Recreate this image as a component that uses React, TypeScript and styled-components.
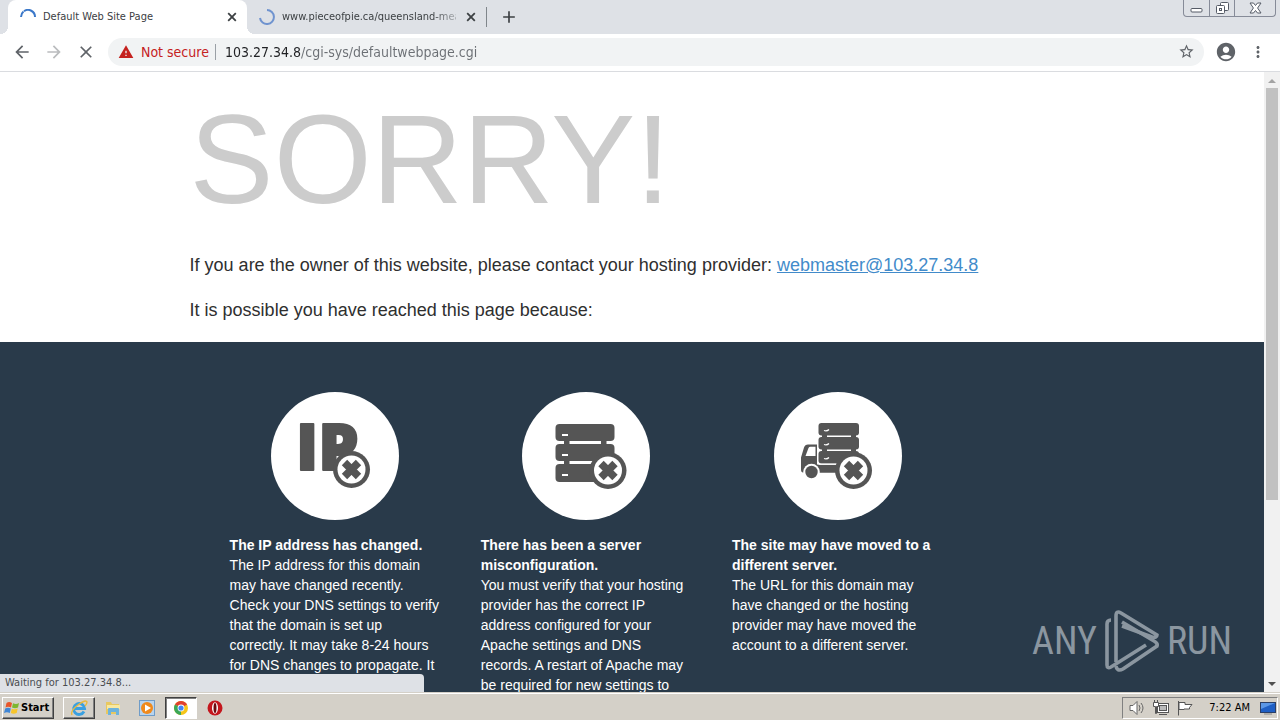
import React from "react";
import styled, { createGlobalStyle, css } from "styled-components";
import {
  MdAccountCircle,
  MdAdd,
  MdArrowBack,
  MdArrowForward,
  MdClose,
  MdMoreVert,
  MdStarBorder,
  MdWarning,
} from "react-icons/md";

const uiFont = '"DejaVu Sans Condensed", "DejaVu Sans", sans-serif';
const pageFont = '"Liberation Sans", Arial, sans-serif';

const GlobalStyle = createGlobalStyle`
  * { box-sizing: border-box; }
  body { margin: 0; background: #fff; }
  button { font: inherit; color: inherit; border: 0; padding: 0; background: none; cursor: pointer; }
  svg { display: block; flex: none; }
`;

const Desktop = styled.div`
  display: flex;
  flex-direction: column;
  height: 100vh;
  overflow: hidden;
  font-family: ${uiFont};
`;

/* Tab strip */

const TabStrip = styled.header`
  display: flex;
  align-items: stretch;
  height: 34px;
  padding: 0 4px 0 8px;
  background: #dee1e6;
`;

const Tab = styled.div<{ $active?: boolean }>`
  position: relative;
  display: flex;
  align-items: center;
  gap: 7px;
  flex: 0 1 239px;
  min-width: 0;
  padding: 0 7px 0 12px;
  color: #3c4043;
  font-size: 11px;
  ${({ $active }) =>
    $active &&
    css`
      background: #fff;
      border-radius: 8px 8px 0 0;
      &::before,
      &::after {
        content: "";
        position: absolute;
        bottom: 0;
        width: 8px;
        height: 8px;
      }
      &::before {
        left: -8px;
        background: radial-gradient(circle at 0 0, #dee1e6 8px, #fff 8px);
      }
      &::after {
        right: -8px;
        background: radial-gradient(circle at 100% 0, #dee1e6 8px, #fff 8px);
      }
    `}
`;

const TabTitle = styled.button<{ $fade?: boolean }>`
  flex: 1;
  min-width: 0;
  overflow: hidden;
  white-space: nowrap;
  text-align: left;
  line-height: 16px;
  ${({ $fade }) => $fade && "mask-image: linear-gradient(to right, #000 150px, transparent 184px);"}
`;

const IconButton = styled.button<{ $size: number; $color?: string }>`
  display: flex;
  align-items: center;
  justify-content: center;
  flex: none;
  width: ${({ $size }) => $size}px;
  height: ${({ $size }) => $size}px;
  color: ${({ $color }) => $color || "#5f6368"};
`;

const TabDivider = styled.span`
  align-self: center;
  width: 1px;
  height: 20px;
  background: #80868b;
`;

const NewTab = styled(IconButton)`
  align-self: center;
  margin-left: 8px;
`;

const WindowControls = styled.div`
  display: flex;
  align-self: flex-start;
  margin-left: auto;
  height: 17px;
  border: 1px solid #868b98;
  border-top: 0;
  border-radius: 0 0 4px 4px;
`;

const WindowButton = styled.button<{ $wide?: boolean }>`
  display: flex;
  align-items: center;
  justify-content: center;
  width: ${({ $wide }) => ($wide ? 41 : 25)}px;
  & + & {
    border-left: 1px solid #868b98;
  }
`;

/* Toolbar */

const Toolbar = styled.nav`
  display: flex;
  align-items: center;
  height: 38px;
  padding: 0 6px 2px;
  background: #fff;
  border-bottom: 1px solid #dadce0;
`;

const Omnibox = styled.div`
  display: flex;
  align-items: center;
  flex: 1;
  min-width: 0;
  height: 28px;
  margin: 0 6px;
  padding: 0 8px 0 10px;
  border-radius: 14px;
  background: #f1f3f4;
`;

const SecurityButton = styled.button`
  display: flex;
  align-items: center;
  gap: 7px;
  color: #c5221f;
  font-size: 14px;
  white-space: nowrap;
`;

const OmniboxDivider = styled.span`
  width: 1px;
  height: 16px;
  margin: 0 9px 0 6px;
  background: #9aa0a6;
`;

const AddressInput = styled.input`
  flex: 1;
  min-width: 0;
  height: 20px;
  padding: 0;
  border: 0;
  outline: 0;
  font-family: ${uiFont};
  font-size: 14px;
  color: #5f6368;
  background: linear-gradient(to right, #202124 76px, #6b6f74 76px);
  background-clip: text;
  -webkit-text-fill-color: transparent;
`;

/* Page */

const Viewport = styled.div`
  position: relative;
  display: flex;
  flex: 1;
  min-height: 0;
`;

const Page = styled.main`
  flex: 1;
  min-width: 0;
  overflow: hidden;
  background: #fff;
  color: #2f2f2f;
  font-family: ${pageFont};
`;

const Container = styled.div`
  width: 70%;
  margin: 0 auto;
`;

const Intro = styled.section`
  padding-bottom: 19px;
`;

const Sorry = styled.h1`
  margin: 0;
  padding: 18px 0 23px;
  color: #ccc;
  font-size: 126px;
  font-weight: 400;
  line-height: 140px;
`;

const Lead = styled.p`
  margin: 0;
  font-size: 18px;
  line-height: 25px;
  & + & {
    margin-top: 20px;
  }
`;

const MailLink = styled.a`
  color: #428bca;
  text-decoration: underline;
`;

const Reasons = styled.section`
  min-height: 100%;
  padding: 50px 0;
  background: #293a4a;
  color: #fff;
`;

const ReasonList = styled.ul`
  display: flex;
  gap: 40px;
  margin: 0;
  padding: 0 0 0 40px;
  list-style: none;
`;

const Reason = styled.li`
  flex: 0 0 25%;
  font-size: 14px;
  line-height: 20px;
`;

const Badge = styled.svg`
  width: 128px;
  height: 128px;
  margin: 0 auto 15px;
`;

const ReasonTitle = styled.h2`
  margin: 0;
  font-size: 14px;
  font-weight: 700;
  line-height: 20px;
`;

const ReasonText = styled.p`
  margin: 0;
`;

const Scrollbar = styled.div`
  display: flex;
  flex-direction: column;
  align-items: center;
  width: 16px;
  background: #f1f1f1;
`;

const ScrollTrack = styled.div`
  flex: 1;
  width: 12px;
`;

const ScrollThumb = styled.div`
  height: 70%;
  background: #c1c1c1;
`;

const StatusBubble = styled.div`
  position: absolute;
  left: 0;
  bottom: 0;
  width: 424px;
  max-width: 50%;
  padding: 0 5px;
  border-top-right-radius: 4px;
  background: #dee1e6;
  color: #4a4d51;
  font-size: 11px;
  line-height: 18px;
`;

const Watermark = styled.div`
  position: absolute;
  right: 48px;
  bottom: 18px;
  display: flex;
  align-items: center;
  gap: 7px;
  color: #8b96a0;
  font-family: "Roboto Condensed", "Liberation Sans Narrow", sans-serif;
  font-size: 38px;
  line-height: 66px;
`;

/* Taskbar */

const Taskbar = styled.footer`
  display: flex;
  align-items: center;
  height: 28px;
  padding: 2px 2px 0;
  border-top: 1px solid #d4d0c8;
  background: #d4d0c8;
  box-shadow: inset 0 1px 0 #fff;
  color: #000;
  font-size: 11px;
`;

const raised = css`
  border: 1px solid;
  border-color: #fff #404040 #404040 #fff;
  box-shadow: inset -1px -1px 0 #808080;
`;

const StartButton = styled.button`
  display: flex;
  align-items: center;
  gap: 1px;
  width: 52px;
  height: 22px;
  margin-right: 9px;
  padding-left: 1px;
  font-weight: 700;
  ${raised}
`;

const TaskButton = styled.button<{ $state?: "raised" | "pressed" }>`
  display: flex;
  align-items: center;
  justify-content: center;
  width: 32px;
  height: 22px;
  margin-right: 2px;
  ${({ $state }) => $state === "raised" && raised}
  ${({ $state }) =>
    $state === "pressed" &&
    css`
      background: #fff;
      border: 1px solid;
      border-color: #404040 #fff #fff #404040;
      box-shadow: inset 1px 1px 0 #808080;
    `}
`;

const Tray = styled.div`
  display: flex;
  align-items: center;
  gap: 8px;
  height: 22px;
  margin-left: auto;
  padding: 0 1px 0 6px;
  border: 1px solid;
  border-color: #808080 #fff #fff #808080;
`;

const Clock = styled.time`
  margin: 0 2px 0 8px;
  white-space: nowrap;
`;

const Spinner = ({ dash, color }: { dash: string; color: string }) => (
  <svg width="16" height="16" viewBox="0 0 16 16" fill="none" aria-hidden="true">
    <path d={dash} stroke={color} strokeWidth="2" />
  </svg>
);

const TabClose = () => (
  <IconButton $size={16} $color="#3c4043" aria-label="Close tab">
    <svg width="10" height="10" viewBox="0 0 10 10" stroke="currentColor" strokeWidth="1.800" aria-hidden="true">
      <path d="M1.200 1.200l7.600 7.600M8.800 1.200l-7.600 7.600" />
    </svg>
  </IconButton>
);

const CrossMark = ({ x, y }: { x: number; y: number }) => (
  <g transform={`translate(${x} ${y})`}>
    <circle r="18.5" fill="#555" />
    <circle r="14" fill="#fff" />
    <path d="M-7-7L7 7M7-7L-7 7" stroke="#555" strokeWidth="7.6" />
  </g>
);

const IpBadge = () => (
  <Badge viewBox="0 0 128 128" aria-hidden="true">
    <circle cx="64" cy="64" r="64" fill="#fff" />
    <text x="25" y="78" fontFamily="'Open Sans', sans-serif" fontWeight="800" fontSize="64" fill="#555" stroke="#555" strokeWidth="2" strokeLinejoin="round">
      IP
    </text>
    <CrossMark x={80.5} y={77.5} />
  </Badge>
);

const ServerBadge = () => (
  <Badge viewBox="0 0 128 128" aria-hidden="true">
    <circle cx="64" cy="64" r="64" fill="#fff" />
    <g fill="#555">
      <rect x="33.500" y="32" width="59" height="17" rx="4" />
      <rect x="33.500" y="52" width="59" height="17" rx="4" />
      <rect x="33.500" y="72" width="59" height="18" rx="4" />
      <path d="M42 48h5.500v6H42zM79 48h5.500v6H79zM42 68h5.500v6H42zM79 68h5.500v6H79z" />
    </g>
    <path d="M40 43h6M40 63h6M40 83h6" stroke="#fff" strokeWidth="2" />
    <CrossMark x={86} y={78.5} />
  </Badge>
);

const TruckBadge = () => (
  <Badge viewBox="0 0 128 128" aria-hidden="true">
    <circle cx="64" cy="64" r="64" fill="#fff" />
    <g fill="#555">
      <rect x="44.500" y="31" width="40.500" height="12.500" rx="3" />
      <rect x="44.500" y="45" width="40.500" height="12.500" rx="3" />
      <rect x="44.500" y="59" width="40.500" height="12.500" rx="3" />
      <path d="M48 43h5v3h-5zM77 43h5v3h-5zM48 57h5v3h-5zM77 57h5v3h-5z" />
      <path d="M43 52.500H34q-3 0-4 3l-3 10v12q0 3 2 3h34v-8H43z" />
      <path d="M43 73h23v7.500H43z" />
    </g>
    <path d="M31.500 64l3-8q.5-1.300 2-1.300H41.500V64z" fill="#fff" />
    <path d="M44.500 72.300H66" stroke="#fff" strokeWidth="1.200" />
    <circle cx="37.500" cy="80" r="8.300" fill="#fff" />
    <circle cx="37.500" cy="80" r="6.200" fill="#555" />
    <path d="M50 38.500q3 1 5-1M50 52.500q3 1 5-1M50 66.500q3 1 5-1" stroke="#fff" strokeWidth="1.200" fill="none" />
    <CrossMark x={79.5} y={78.5} />
  </Badge>
);

const PlayLogo = () => (
  <svg width="56" height="66" viewBox="0 0 56 66" fill="none" stroke="currentColor" strokeWidth="3.600" aria-hidden="true">
    <path d="M7 12Q3 12 3 16V57Q3 61 7 59L42 37" />
    <path d="M12 54V8Q12 2 17 5L53 27Q53 30 48 29L18 18" />
    <path d="M12 58Q13 64 19 61L53 38Q54 35 50 33L18 14" />
  </svg>
);

const reasons = [
  {
    Icon: IpBadge,
    title: "The IP address has changed.",
    text: "The IP address for this domain may have changed recently. Check your DNS settings to verify that the domain is set up correctly. It may take 8-24 hours for DNS changes to propagate. It may be possible to restore access to this site by following these instructions for clearing your dns cache.",
  },
  {
    Icon: ServerBadge,
    title: "There has been a server misconfiguration.",
    text: "You must verify that your hosting provider has the correct IP address configured for your Apache settings and DNS records. A restart of Apache may be required for new settings to take affect.",
  },
  {
    Icon: TruckBadge,
    title: "The site may have moved to a different server.",
    text: "The URL for this domain may have changed or the hosting provider may have moved the account to a different server.",
  },
];

export default function App() {
  return (
    <Desktop>
      <GlobalStyle />
      <TabStrip>
        <Tab $active>
          <Spinner color="#3b78c9" dash="M1 8A7 7 0 0 1 3.500 2.600M4 2.200A7 7 0 0 1 15 8" />
          <TabTitle>Default Web Site Page</TabTitle>
          <TabClose />
        </Tab>
        <Tab>
          <Spinner color="#6f93cf" dash="M8 1A7 7 0 1 1 1 9" />
          <TabTitle $fade>www.pieceofpie.ca/queensland-mea</TabTitle>
          <TabClose />
        </Tab>
        <TabDivider />
        <NewTab $size={28} $color="#3c4043" aria-label="New tab">
          <MdAdd size={20} />
        </NewTab>
        <WindowControls>
          <WindowButton aria-label="Minimize">
            <svg width="13" height="14" viewBox="0 0 13 14" fill="#fff" stroke="#555b66">
              <rect x="1" y="7.500" width="11" height="3.500" rx="1" />
            </svg>
          </WindowButton>
          <WindowButton aria-label="Restore">
            <svg width="13" height="14" viewBox="0 0 13 14" fill="#fff" stroke="#555b66">
              <rect x="4.500" y="1.500" width="8" height="8" rx="1" />
              <rect x="0.500" y="4.500" width="8" height="8" rx="1" />
              <rect x="3.500" y="7.500" width="2" height="2" />
            </svg>
          </WindowButton>
          <WindowButton $wide aria-label="Close">
            <svg width="13" height="12" viewBox="0 0 13 12" fill="#fff" stroke="#555b66">
              <path d="M1 1h3.500l2 2.500L8.500 1H12L8.600 6 12 11H8.500l-2-2.500-2 2.500H1l3.400-5z" />
            </svg>
          </WindowButton>
        </WindowControls>
      </TabStrip>

      <Toolbar>
        <IconButton $size={32} aria-label="Back"><MdArrowBack size={20} /></IconButton>
        <IconButton $size={32} $color="#babcbe" aria-label="Forward"><MdArrowForward size={20} /></IconButton>
        <IconButton $size={32} aria-label="Stop loading"><MdClose size={20} /></IconButton>
        <Omnibox>
          <SecurityButton>
            <MdWarning size={16} />
            Not secure
          </SecurityButton>
          <OmniboxDivider />
          <AddressInput aria-label="Address" defaultValue="103.27.34.8/cgi-sys/defaultwebpage.cgi" />
          <IconButton $size={20} aria-label="Bookmark"><MdStarBorder size={17} /></IconButton>
        </Omnibox>
        <IconButton $size={32} aria-label="Profile"><MdAccountCircle size={22} /></IconButton>
        <IconButton $size={32} aria-label="Menu"><MdMoreVert size={18} /></IconButton>
      </Toolbar>

      <Viewport>
        <Page>
          <Intro>
            <Container>
              <Sorry>SORRY!</Sorry>
              <Lead>
                If you are the owner of this website, please contact your hosting provider:{" "}
                <MailLink href="mailto:webmaster@103.27.34.8">webmaster@103.27.34.8</MailLink>
              </Lead>
              <Lead>It is possible you have reached this page because:</Lead>
            </Container>
          </Intro>
          <Reasons>
            <Container>
              <ReasonList>
                {reasons.map(({ Icon, title, text }) => (
                  <Reason key={title}>
                    <Icon />
                    <ReasonTitle>{title}</ReasonTitle>
                    <ReasonText>{text}</ReasonText>
                  </Reason>
                ))}
              </ReasonList>
            </Container>
          </Reasons>
        </Page>
        <Scrollbar>
          <svg width="16" height="16" viewBox="0 0 16 16"><path d="M4 11l4-4 4 4z" fill="#a3a3a3" /></svg>
          <ScrollTrack><ScrollThumb /></ScrollTrack>
          <svg width="16" height="16" viewBox="0 0 16 16"><path d="M4 6l4 4 4-4z" fill="#505050" /></svg>
        </Scrollbar>
        <Watermark>
          <span>ANY</span>
          <PlayLogo />
          <span>RUN</span>
        </Watermark>
        <StatusBubble>Waiting for 103.27.34.8...</StatusBubble>
      </Viewport>

      <Taskbar>
        <StartButton>
          <svg width="16" height="16" viewBox="0 0 16 16" aria-hidden="true">
            <path d="M2.500 3Q5 1 8 3L7 7.500Q4 6 1.500 7.500z" fill="#e8562a" />
            <path d="M9 3.300Q12 5 15 3L14 7.500Q11 9 8 7.500z" fill="#7db72f" />
            <path d="M1.200 8.500Q4 7 6.800 8.500L5.800 13Q3 11.500 0 13z" fill="#3f86d6" />
            <path d="M7.800 8.700Q11 10 13.700 8.500L12.700 13Q9.500 14.500 6.800 13z" fill="#f7c52b" />
          </svg>
          Start
        </StartButton>
        <TaskButton $state="raised" aria-label="Internet Explorer">
          <svg width="18" height="18" viewBox="0 0 18 18" fill="none" aria-hidden="true">
            <path d="M14 12.500A5.500 5.500 0 1 1 14.600 9.500H5" stroke="#3aa0e0" strokeWidth="2.800" />
            <path d="M2 16Q0 12 8 6T17 3Q17 5 15 7" stroke="#e9b93c" strokeWidth="1.400" />
          </svg>
        </TaskButton>
        <TaskButton aria-label="Windows Explorer">
          <svg width="16" height="16" viewBox="0 0 16 16" aria-hidden="true">
            <path d="M1 2h5l1 2h7v10H1z" fill="#e8c860" />
            <path d="M2 5h13v4H2z" fill="#f8e8a0" />
            <path d="M3 15V9q0-1 1-1h9q1 0 1 1v6h-3v-3H6v3z" fill="#6db3dc" />
          </svg>
        </TaskButton>
        <TaskButton aria-label="Media Player">
          <svg width="16" height="16" viewBox="0 0 16 16" aria-hidden="true">
            <rect x="0.500" y="0.500" width="15" height="15" fill="#b8d4ee" stroke="#6f9cc8" />
            <circle cx="8" cy="8" r="6" fill="#f08a1c" />
            <path d="M6 4.500l6 3.500-6 3.500z" fill="#fff" />
          </svg>
        </TaskButton>
        <TaskButton $state="pressed" aria-label="Google Chrome">
          <svg width="14" height="14" viewBox="0 0 14 14" aria-hidden="true">
            <circle cx="7" cy="7" r="7" fill="#f5c518" />
            <path d="M7 7L.94 3.500A7 7 0 0 1 13.060 3.500z" fill="#e0402f" />
            <path d="M7 7L.94 3.500A7 7 0 0 0 7 14z" fill="#3aa757" />
            <circle cx="7" cy="7" r="3.400" fill="#fff" />
            <circle cx="7" cy="7" r="2.600" fill="#4285f4" />
          </svg>
        </TaskButton>
        <TaskButton aria-label="Opera">
          <svg width="16" height="16" viewBox="0 0 16 16" aria-hidden="true">
            <circle cx="8" cy="8" r="7.500" fill="#c4161d" />
            <ellipse cx="8" cy="8" rx="3" ry="5.800" fill="#fff" />
            <ellipse cx="8" cy="8" rx="1.500" ry="5" fill="#6d0a0e" />
          </svg>
        </TaskButton>
        <Tray>
          <svg width="16" height="16" viewBox="0 0 16 16" fill="#fff" stroke="#666" aria-hidden="true">
            <path d="M1 5.500h3l4-4v13l-4-4H1z" />
            <path d="M10 5q2 3 0 6M12 3q4 5 0 10" fill="none" />
          </svg>
          <svg width="16" height="16" viewBox="0 0 16 16" fill="#fff" stroke="#555" aria-hidden="true">
            <rect x="4.500" y="3.500" width="11" height="9" />
            <rect x="6.500" y="5.500" width="7" height="5" fill="#bbb" />
            <path d="M6 14.500h8" />
            <path d="M0.500 2.500h5v4h-2v7h-1v-7h-2zM1.500 0v2M4.500 0v2" />
          </svg>
          <svg width="16" height="16" viewBox="0 0 16 16" fill="#fff" stroke="#555" aria-hidden="true">
            <path d="M1.500 1v14.500" />
            <path d="M2 2.500h6v2h7l-2.500 3 0 1.500H7V9.500H2z" />
          </svg>
          <Clock>7:22 AM</Clock>
          <svg width="16" height="14" viewBox="0 0 16 14" aria-hidden="true">
            <rect x="0.500" y="1.500" width="15" height="10" fill="#1f5fc4" stroke="#2b3f66" />
            <path d="M1 2h14L1 8z" fill="#5b97e6" />
            <path d="M4 13h8" stroke="#888" />
          </svg>
        </Tray>
      </Taskbar>
    </Desktop>
  );
}
